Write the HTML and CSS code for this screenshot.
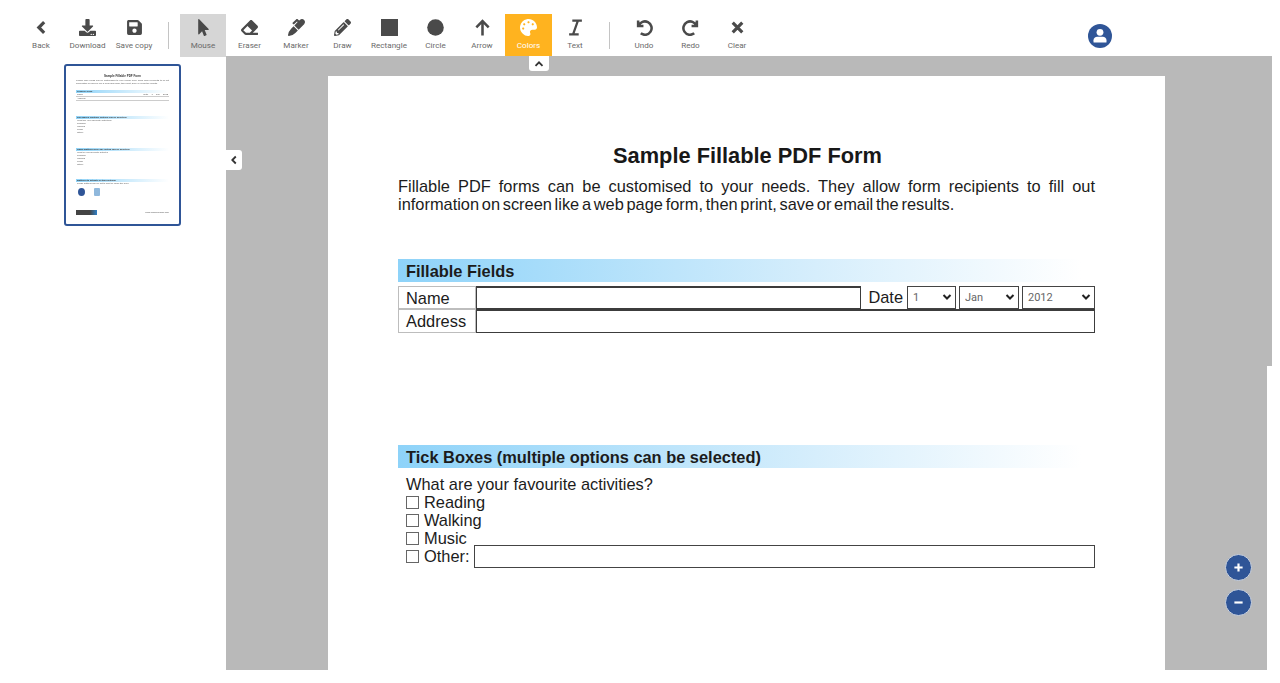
FILE: index.html
```html
<!DOCTYPE html>
<html lang="en">
<head>
<meta charset="utf-8">
<title>Sample Fillable PDF Form</title>
<link rel="stylesheet" href="styles.css">
</head>
<body>
<header class="toolbar">
  <div class="group">
    <button class="tool"><svg class="ico" viewBox="0 0 16 16"><path class="stroke heavy" d="M10.500 3 5.500 8l5 5"/></svg><span>Back</span></button>
    <button class="tool"><svg class="ico" viewBox="0 0 512 512"><path d="M216 0h80c13.300 0 24 10.700 24 24v168h87.700c17.800 0 26.700 21.500 14.100 34.100L269.700 378.300c-7.500 7.500-19.800 7.500-27.300 0L90.100 226.100c-12.600-12.600-3.700-34.100 14.100-34.100H192V24c0-13.300 10.700-24 24-24zm296 376v112c0 13.300-10.700 24-24 24H24c-13.300 0-24-10.700-24-24V376c0-13.300 10.700-24 24-24h146.700l49 49c20.100 20.100 52.500 20.100 72.600 0l49-49H488c13.300 0 24 10.700 24 24zm-124 88c0-11-9-20-20-20s-20 9-20 20 9 20 20 20 20-9 20-20zm64 0c0-11-9-20-20-20s-20 9-20 20 9 20 20 20 20-9 20-20z"/></svg><span>Download</span></button>
    <button class="tool"><svg class="ico" viewBox="0 0 448 512"><path d="M433.941 129.941l-83.882-83.882A48 48 0 0 0 316.118 32H48C21.490 32 0 53.490 0 80v352c0 26.510 21.490 48 48 48h352c26.510 0 48-21.490 48-48V163.882a48 48 0 0 0-14.059-33.941zM224 416c-35.346 0-64-28.654-64-64 0-35.346 28.654-64 64-64s64 28.654 64 64c0 35.346-28.654 64-64 64zm96-304.520V212c0 6.627-5.373 12-12 12H76c-6.627 0-12-5.373-12-12V108c0-6.627 5.373-12 12-12h228.520c3.183 0 6.235 1.264 8.485 3.515l3.480 3.480A11.996 11.996 0 0 1 320 111.480z"/></svg><span>Save copy</span></button>
  </div>
  <i class="sep"></i>
  <div class="group">
    <button class="tool active"><svg class="ico" viewBox="0 0 320 512"><path d="M302.189 329.126H196.105l55.831 135.993c3.889 9.428-.555 19.999-9.444 23.999l-49.165 21.427c-9.165 4-19.443-.571-23.332-9.714l-53.053-129.136-86.664 89.138C18.729 472.710 0 463.554 0 447.977V18.299C0 1.899 19.921-6.096 30.277 5.443l284.412 292.542c11.472 11.179 3.007 31.141-12.500 31.141z"/></svg><span>Mouse</span></button>
    <button class="tool"><svg class="ico" viewBox="0 0 512 512"><path d="M497.941 273.941c18.745-18.745 18.745-49.137 0-67.882l-160-160c-18.745-18.745-49.136-18.746-67.883 0l-256 256c-18.745 18.745-18.745 49.137 0 67.882l96 96A48.004 48.004 0 0 0 144 480h356c6.627 0 12-5.373 12-12v-40c0-6.627-5.373-12-12-12H355.883l142.058-142.059zm-302.627-62.627l137.373 137.373L265.373 416H150.628l-80-80 124.686-124.686z"/></svg><span>Eraser</span></button>
    <button class="tool"><svg class="ico" viewBox="0 0 512 512"><path d="M93.950 290.030A327.038 327.038 0 0 0 .17 485.110l-.03.23c-1.700 15.280 11.210 28.200 26.490 26.510a327.020 327.020 0 0 0 195.340-93.800l75.400-75.400-128.020-128.020-75.400 75.400zM485.490 26.510c-35.350-35.350-92.670-35.350-128.020 0l-21.760 21.760-36.560-36.550c-15.620-15.620-40.950-15.620-56.560 0L138.470 115.840c-6.250 6.250-6.250 16.380 0 22.630l22.620 22.620c6.250 6.250 16.380 6.250 22.630 0l87.150-87.150 19.590 19.590L191.980 192 320 320.020l165.490-165.490c35.350-35.350 35.350-92.660 0-128.020z"/></svg><span>Marker</span></button>
    <button class="tool"><svg class="ico" viewBox="0 0 512 512"><path d="M497.900 142.100l-46.100 46.100c-4.700 4.700-12.300 4.700-17 0l-111-111c-4.700-4.700-4.700-12.300 0-17l46.100-46.100c18.700-18.700 49.100-18.700 67.900 0l60.100 60.100c18.800 18.700 18.800 49.100 0 67.900zM284.200 99.800L21.600 362.400.4 483.900c-2.900 16.400 11.400 30.600 27.800 27.800l121.500-21.300 262.600-262.600c4.700-4.700 4.700-12.300 0-17l-111-111c-4.800-4.700-12.400-4.700-17.100 0zM124.100 339.900c-5.500-5.500-5.500-14.300 0-19.800l154-154c5.500-5.500 14.300-5.500 19.800 0s5.500 14.300 0 19.800l-154 154c-5.500 5.500-14.300 5.500-19.800 0zM88 424h48v36.300l-64.500 11.300-31.100-31.100L51.700 376H88v48z"/></svg><span>Draw</span></button>
    <button class="tool"><svg class="ico" viewBox="0 0 16 16"><rect width="16" height="16"/></svg><span>Rectangle</span></button>
    <button class="tool"><svg class="ico" viewBox="0 0 16 16"><circle cx="8" cy="8" r="7.800"/></svg><span>Circle</span></button>
    <button class="tool"><svg class="ico" viewBox="0 0 16 16"><path class="stroke" d="M8 15.500V2M2.200 7.800 8 2l5.800 5.800"/></svg><span>Arrow</span></button>
    <button class="tool colors"><svg class="ico" viewBox="0 0 512 512"><path d="M204.300 5C104.900 24.400 24.800 104.300 5.200 203.400c-37 187 131.700 326.400 258.800 306.700 41.200-6.400 61.400-54.600 42.500-91.700-23.100-45.400 9.900-98.400 60.900-98.400h79.700c35.800 0 64.800-29.600 64.900-65.300C511.500 97.100 368.100-26.900 204.300 5zM96 320c-17.700 0-32-14.300-32-32s14.300-32 32-32 32 14.300 32 32-14.300 32-32 32zm32-128c-17.700 0-32-14.300-32-32s14.300-32 32-32 32 14.300 32 32-14.300 32-32 32zm128-64c-17.700 0-32-14.300-32-32s14.300-32 32-32 32 14.300 32 32-14.300 32-32 32zm128 64c-17.700 0-32-14.300-32-32s14.300-32 32-32 32 14.300 32 32-14.300 32-32 32z"/></svg><span>Colors</span></button>
    <button class="tool"><svg class="ico" viewBox="0 0 16 16"><path class="thin" d="M5 1.500h9M2 14.500h9M10.300 1.500 5.700 14.500"/></svg><span>Text</span></button>
  </div>
  <i class="sep sep-b"></i>
  <div class="group">
    <button class="tool"><svg class="ico" viewBox="0 0 16 16"><path class="stroke" d="M2 1.500v5h5M2.500 6.300A6.300 6.300 0 1 1 4.500 13.500"/></svg><span>Undo</span></button>
    <button class="tool"><svg class="ico" viewBox="0 0 16 16"><path class="stroke" d="M14 1.500v5H9M13.500 6.300A6.300 6.300 0 1 0 11.500 13.500"/></svg><span>Redo</span></button>
    <button class="tool"><svg class="ico" viewBox="0 0 16 16"><path class="stroke heavy" d="M3.500 3.500l9 9M12.500 3.500l-9 9"/></svg><span>Clear</span></button>
  </div>
  <svg class="user" viewBox="0 0 24 24"><circle cx="12" cy="12" r="12"/><circle class="w" cx="12" cy="8.300" r="3.400"/><path class="w" d="M5.500 18v-1.800c0-2.200 1.800-3.400 3.700-3.400h5.600c1.900 0 3.700 1.200 3.700 3.400V18c0 .4-.2.600-.6.600H6.100c-.4 0-.6-.2-.6-.6z"/></svg>
</header>

<main class="workspace">
  <aside class="sidebar">
    <div class="thumb">
      <b class="t-title">Sample Fillable PDF Form</b>
      <p class="t-text">Fillable PDF forms can be customised to your needs. They allow form recipients to fill out information on screen like a web page form, then print, save or email the results.</p>
      <div class="t-sec t-first"><b class="t-bar">Fillable Fields</b><p class="t-row"><span>Name</span><span>Date &nbsp; &nbsp; 1 &nbsp; &nbsp; Jan &nbsp; &nbsp; 2012</span></p><p class="t-row">Address</p></div>
      <div class="t-sec t-tick"><b class="t-bar">Tick Boxes (multiple options can be selected)</b><p>What are your favourite activities?<br>Reading<br>Walking<br>Music<br>Other:</p></div>
      <div class="t-sec t-radio"><b class="t-bar">Radio Buttons (only one option can be selected)</b><p>What is your favourite activity?<br>Reading<br>Walking<br>Music<br>Other:</p></div>
      <div class="t-sec t-act"><b class="t-bar">Buttons (to activate certain actions)</b><p>These buttons can be set to print or email the form.</p>
        <div class="t-icons"><i class="t-ic a"></i><i class="t-ic b"></i></div></div>
      <div class="t-foot"><i class="t-logo"></i><span>www.fillabledesign.com</span></div>
    </div>
  </aside>
  <section class="viewer">
    <button class="tab tab-top"><svg viewBox="0 0 12 12"><path d="M2.500 7.800 6 4.300l3.500 3.500"/></svg></button>
    <button class="tab tab-side"><svg viewBox="0 0 12 12"><path d="M7.800 2.500 4.300 6l3.500 3.500"/></svg></button>
    <article class="page">
      <h1>Sample Fillable PDF Form</h1>
      <p class="intro"><span class="l1">Fillable PDF forms can be customised to your needs. They allow form recipients to fill out</span><span class="l2">information on screen like a web page form, then print, save or email the results.</span></p>
      <h2 class="bar bar-a">Fillable Fields</h2>
      <div class="fields">
        <div class="label">Name</div>
        <div class="input"></div>
        <div class="date">Date</div>
        <select class="s1"><option>1</option></select>
        <select class="s2"><option>Jan</option></select>
        <select class="s3"><option>2012</option></select>
        <div class="label">Address</div>
        <div class="input wide"></div>
      </div>
      <h2 class="bar bar-b">Tick Boxes (multiple options can be selected)</h2>
      <div class="ticks">
        <p>What are your favourite activities?</p>
        <div class="tick"><i></i>Reading</div>
        <div class="tick"><i></i>Walking</div>
        <div class="tick"><i></i>Music</div>
        <div class="tick other"><i></i>Other:<div class="input"></div></div>
      </div>
    </article>
    <div class="zoom-halo">
      <button class="zoom"><svg viewBox="0 0 12 12"><path d="M6 2.200v7.600M2.200 6h7.600"/></svg></button>
      <button class="zoom"><svg viewBox="0 0 12 12"><path d="M2.200 6h7.600"/></svg></button>
    </div>
  </section>
  <div class="scroll"></div>
</main>
</body>
</html>
```
FILE: styles.css
```css
* { box-sizing: border-box; }
html, body { margin: 0; height: 683px; overflow: hidden; background: #fff; }
body { font-family: "Liberation Sans", Arial, sans-serif; color: #222; }
p, h1, h2 { margin: 0; font-weight: normal; }
button { border: 0; padding: 0; background: none; font: inherit; color: inherit; }

.toolbar { height: 56px; padding: 14px 0 0 17.750px; display: flex; align-items: flex-start; position: relative; }
.group { display: flex; }
.tool { width: 46.500px; height: 42.500px; display: flex; flex-direction: column; align-items: center; padding-top: 5px; font: 8.100px/10px Roboto, sans-serif; color: #6a6a6a; }
.tool span { margin-top: 4px; white-space: nowrap; }
.ico { width: 17px; height: 17px; fill: #4a4a4a; flex: none; display: block; }
.stroke, .thin { fill: none; stroke: #4a4a4a; stroke-width: 2.400; }
.heavy { stroke-width: 3; }
.thin { stroke-width: 2.100; }
.active { background: #d6d6d6; }
.colors { background: #ffb31f; color: #fff; }
.colors .ico { fill: #fff; }
.sep { width: 1px; height: 27px; margin: 8px 11px 0 10.500px; background: #c4c4c4; }
.sep-b { margin: 8px 11px 0 10.500px; }
.user { width: 24px; height: 24px; position: absolute; left: 1087.500px; top: 23.500px; fill: #2f5597; }
.user .w { fill: #fff; }

.workspace { display: flex; height: 614px; }
.sidebar { width: 226px; flex: none; padding: 8px 0 0 64px; }
.thumb { width: 117px; height: 162px; border: 2px solid #2f5597; border-radius: 3px; padding: 9px 10px 0 10px; font-size: 2.300px; line-height: 3px; color: #555; position: relative; overflow: hidden; }
.thumb > *:not(.t-foot) { filter: blur(.25px); }
.t-title { display: block; text-align: center; font-size: 3px; color: #333; }
.t-text { margin-top: 1px; text-align: justify; }
.t-bar { display: block; height: 3px; padding-left: 1px; color: #333; background: linear-gradient(90deg, #8fd3f8, #fff); }
.t-row { border-bottom: .5px solid #ccc; height: 4px; padding: 0 1px; white-space: nowrap; display: flex; justify-content: space-between; }
.t-sec p { padding-left: 1px; }
.t-first { margin-top: 5px; }
.t-tick { margin-top: 15px; }
.t-radio { margin-top: 14px; }
.t-act { margin-top: 13px; }
.t-icons { display: flex; gap: 9px; margin: 3px 0 0 2px; }
.t-ic { width: 7px; height: 8px; border-radius: 50%; background: #2f5597; }
.t-ic.b { width: 6px; border-radius: 1px; background: #8fb8dc; }
.t-foot { position: absolute; left: 10px; right: 10px; top: 144px; display: flex; justify-content: space-between; align-items: center; filter: blur(.25px); }
.t-logo { width: 21px; height: 5px; background: linear-gradient(90deg, #444 65%, #2f80c8); }

.viewer { width: 1041px; flex: none; background: #b9b9b9; position: relative; padding: 20px 0 0 102px; overflow: hidden; }
.scroll { width: 5px; height: 310px; background: #b9b9b9; }
.page { width: 837px; height: 700px; background: #fff; padding: 67px 70px 0; color: #1c1c1c; }
h1 { text-align: center; padding-left: 2px; font-size: 21.800px; line-height: 26px; font-weight: bold; color: #181818; }
.intro { margin-top: 7.500px; font-size: 16.400px; line-height: 18px; }
.l1, .l2 { display: block; white-space: nowrap; }
.l1 { white-space: normal; text-align: justify; text-align-last: justify; }
.l2 { word-spacing: -1.850px; }
.bar { height: 22.500px; padding: 1px 0 0 8px; font-size: 16.400px; line-height: 23px; font-weight: bold; background: linear-gradient(90deg, #8ed3f9, #d6eefc 60%, #fff 98%); }
.bar-a { margin-top: 46.500px; }
.bar-b { margin-top: 112.500px; }

.fields { margin-top: 4.500px; display: grid; grid-template-columns: 78px 385px 46px 49px 3px 60px 3px 73px; grid-template-rows: 23px 23.500px; font-size: 16.400px; line-height: 22px; }
.label { border: 1px solid #bdbdbd; padding-left: 7px; }
.input { border: 1.500px solid #3c3c3c; background: #fff; }
.fields .input { border-width: 2px 1px 1px; }
.wide { grid-column: 2 / -1; }
.date { text-align: right; padding-right: 4px; }
select { height: 22.500px; padding: 0 0 0 5px; border: 1.500px solid #444; border-radius: 0; appearance: none; background: #fff url("data:image/svg+xml,%3Csvg xmlns='http://www.w3.org/2000/svg' width='10' height='6'%3E%3Cpath d='M1.500 1 5 4.500 8.500 1' fill='none' stroke='%23222' stroke-width='2'/%3E%3C/svg%3E") no-repeat right 3px center; font: 11px Roboto, sans-serif; color: #666; }
.s2 { grid-column: 6; }
.s3 { grid-column: 8; }

.ticks { padding: 7px 0 0 8px; font-size: 16.400px; line-height: 19px; }
.tick { display: flex; align-items: center; height: 18px; }
.tick i { width: 13px; height: 13px; margin-right: 5px; border: 1px solid #666; flex: none; }
.other .input { flex: 1; height: 22.500px; margin-left: 4px; border-color: #444; }

.tab { position: absolute; background: #fff; display: flex; align-items: center; justify-content: center; }
.tab svg { width: 12px; height: 12px; fill: none; stroke: #333; stroke-width: 1.800; }
.tab-top { left: 303px; top: 0; width: 20px; height: 15px; border-radius: 0 0 3px 3px; }
.tab-side { left: 0; top: 94px; width: 16px; height: 20px; border-radius: 0 3px 3px 0; }
.zoom-halo { position: absolute; left: 999px; top: 498px; display: flex; flex-direction: column; gap: 8px; }
.zoom { width: 27px; height: 27px; border-radius: 50%; background: #2f5597; border: 1px solid #ccd3df; display: flex; align-items: center; justify-content: center; }
.zoom svg { width: 13px; height: 13px; fill: none; stroke: #fff; stroke-width: 2; }
```
